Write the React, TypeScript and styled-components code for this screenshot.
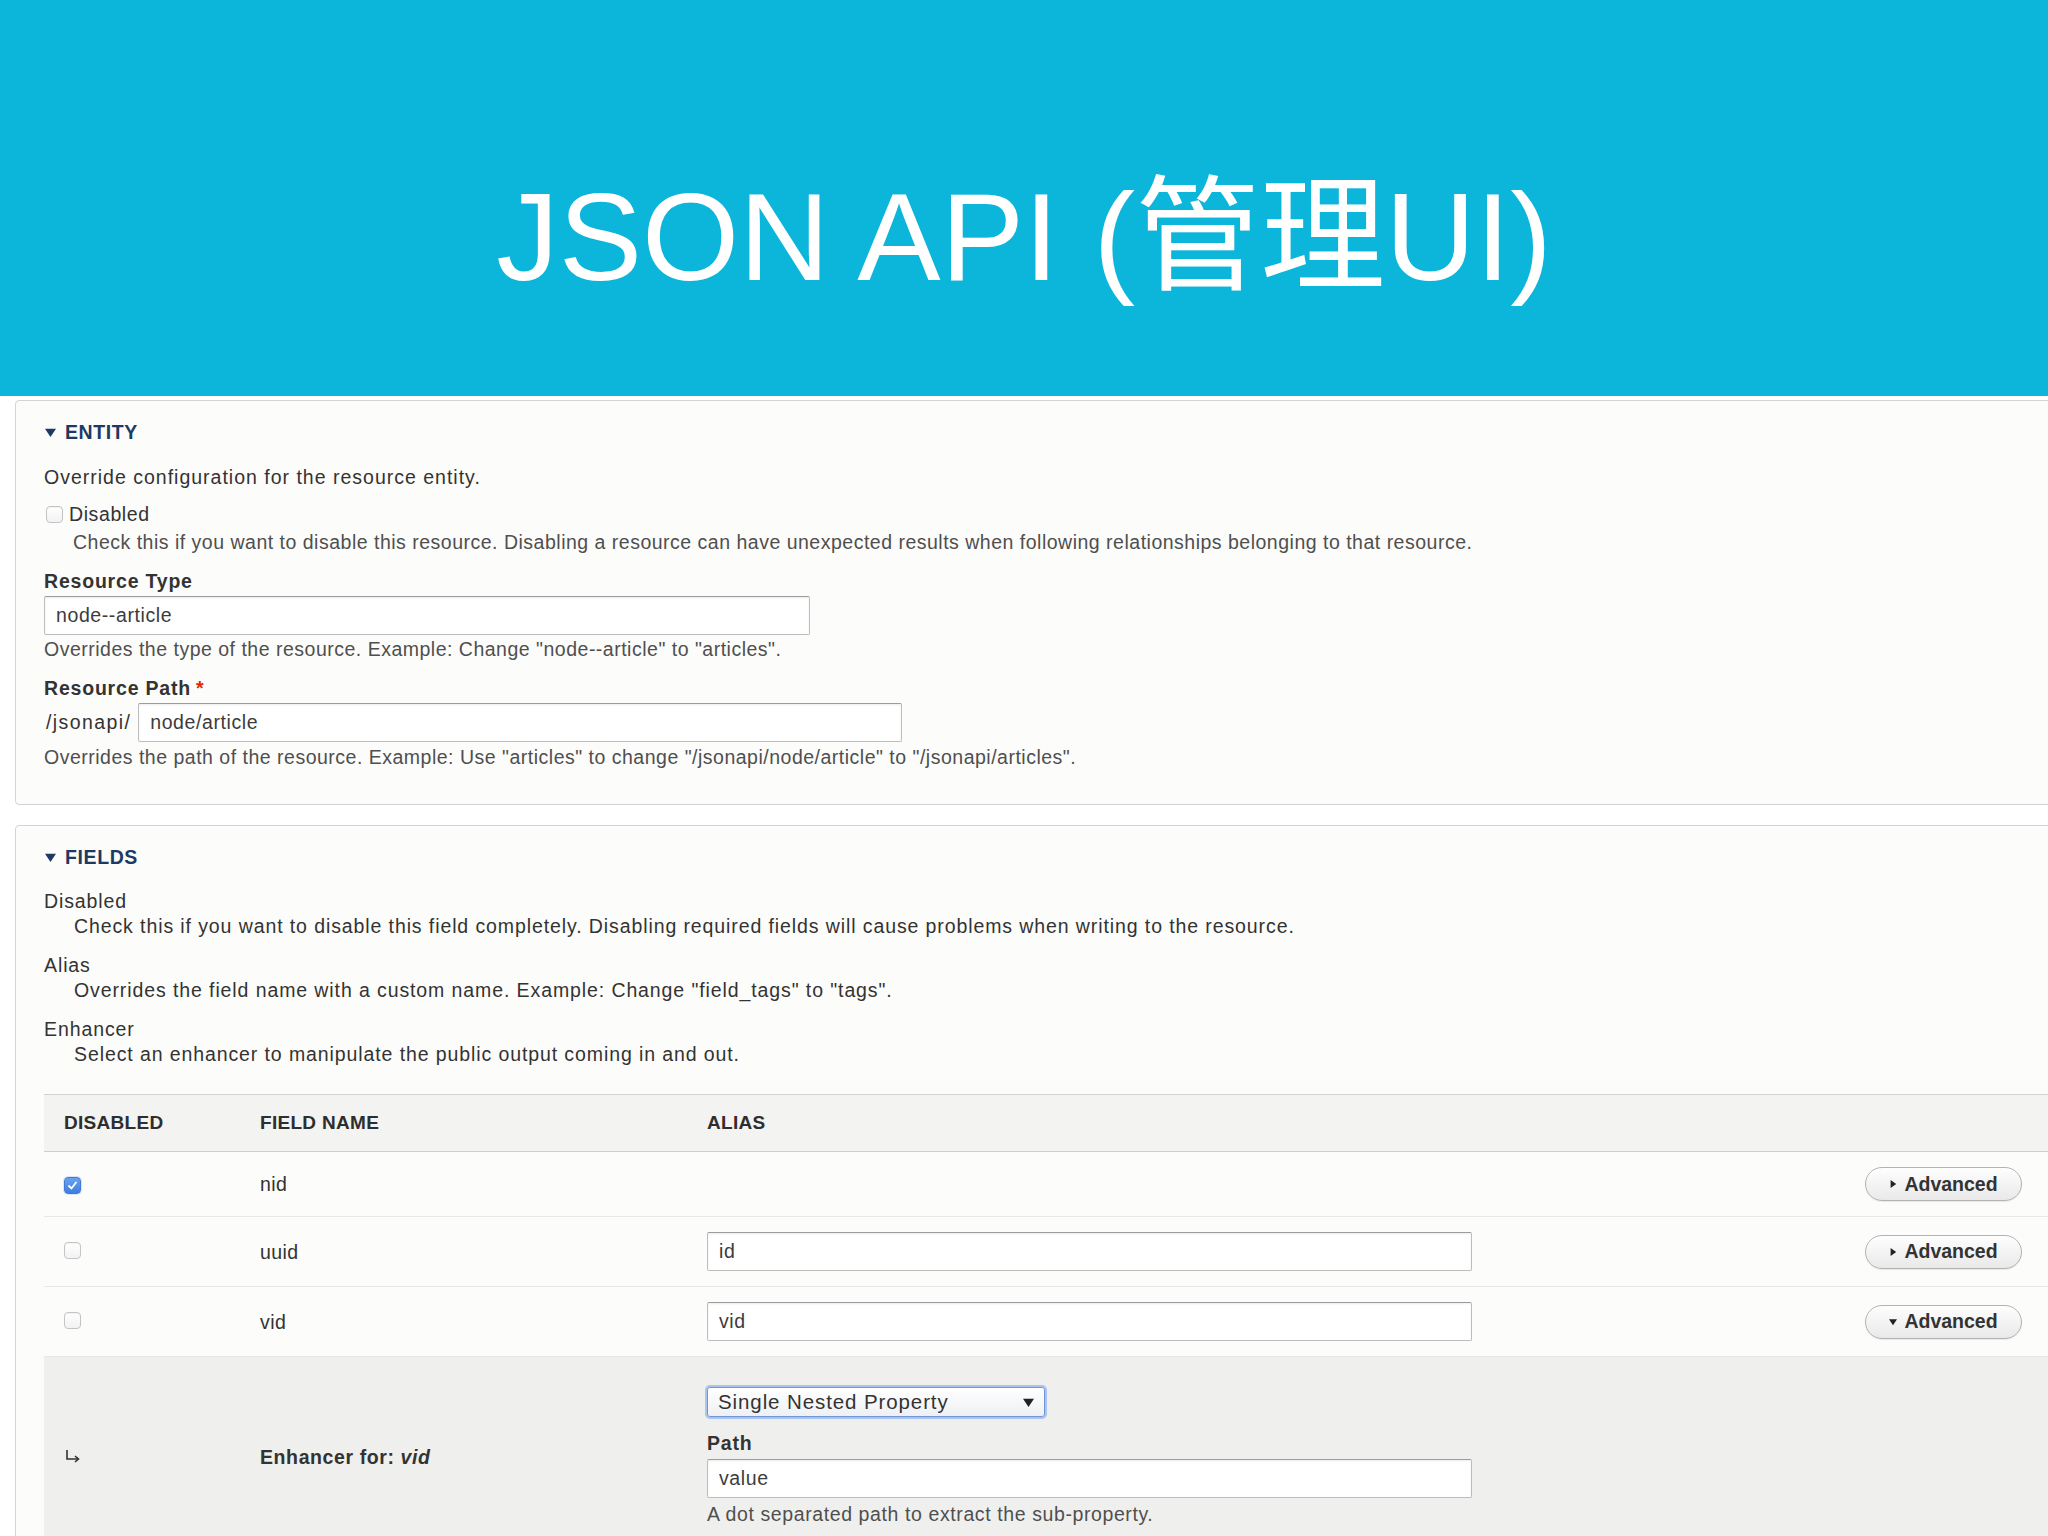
import React from 'react';
import styled, { createGlobalStyle } from 'styled-components';

const GlobalStyle = createGlobalStyle`
    html, body {
        margin: 0;
        padding: 0;
        background: #ffffff;
    }
    body {
        width: 2048px;
        height: 1536px;
        overflow: hidden;
        font-family: "Liberation Sans", Arial, sans-serif;
        color: #333333;
    }
    * {
        box-sizing: border-box;
    }
`;

const Header = styled.header`
    height: 396px;
    background: #0cb5da;
    display: flex;
    justify-content: center;
    padding-top: 174px;
`;

const Title = styled.h1`
    margin: 0;
    color: #ffffff;
    font-family: "Liberation Sans", "Noto Sans CJK SC", Arial, sans-serif;
    font-weight: 400;
    font-size: 125px;
    line-height: 125px;
    white-space: nowrap;
`;

const Main = styled.main`
    display: flex;
    flex-direction: column;
    gap: 20px;
    padding-top: 4px;
`;

const Panel = styled.section<{ $open?: boolean }>`
    margin-left: 15px;
    width: calc(100% + 20px);
    border: 1px solid #d3d3d1;
    border-radius: 4px;
    background: #fcfcfa;
    padding: 18px 0 ${p => (p.$open ? '0' : '34px')} 28px;
    overflow: hidden;
    ${p => p.$open && 'min-height: 720px;'}
`;

const Summary = styled.div`
    display: flex;
    align-items: center;
    gap: 9px;
    height: 26px;
    padding-left: 1px;
    color: #1c3a64;
    font-weight: 700;
    font-size: 19.5px;
    letter-spacing: 0.6px;
    text-transform: uppercase;
`;

const Text = styled.p<{ $top?: number }>`
    margin: ${p => p.$top ?? 0}px 0 0 0;
    font-size: 19.5px;
    line-height: 26px;
    letter-spacing: 1px;
    color: #333333;
`;

const Description = styled.div<{ $top?: number; $indent?: number }>`
    margin: ${p => p.$top ?? 0}px 0 0 ${p => p.$indent ?? 0}px;
    font-size: 19.5px;
    line-height: 26px;
    letter-spacing: 0.5px;
    color: #4f4f4f;
    white-space: nowrap;
`;

const CheckRow = styled.label`
    display: flex;
    align-items: center;
    gap: 6px;
    margin: 11px 0 0 2px;
    height: 26px;
    font-size: 19.5px;
    letter-spacing: 0.6px;
`;

const Box = styled.span<{ $checked?: boolean }>`
    display: inline-flex;
    align-items: center;
    justify-content: center;
    width: 17px;
    height: 17px;
    border-radius: 4px;
    border: 1px solid ${p => (p.$checked ? '#3f7ad6' : '#c4c4c4')};
    background: ${p =>
        p.$checked ? 'linear-gradient(#6aa2f0, #3d7fe0)' : 'linear-gradient(#ffffff, #f2f2f2)'};
    box-shadow: ${p => (p.$checked ? '0 0 0 1px rgba(120,160,230,0.25)' : 'inset 0 1px 1px rgba(0,0,0,0.05)')};
`;

const FormItem = styled.div`
    margin-top: 13px;
`;

const Label = styled.div`
    font-size: 19.5px;
    font-weight: 700;
    line-height: 26px;
    letter-spacing: 0.8px;
    color: #333333;
    margin-bottom: 2px;
`;

const Required = styled.span`
    color: #e32700;
    margin-left: 5px;
`;

const TextInput = styled.input<{ $width: number }>`
    display: block;
    width: ${p => p.$width}px;
    height: 39px;
    padding: 0 11px;
    border: 1px solid #bdbdbd;
    border-top-color: #9c9c9c;
    border-radius: 2px;
    background: #ffffff;
    box-shadow: inset 0 1px 2px rgba(0, 0, 0, 0.08);
    font-family: "Liberation Sans", Arial, sans-serif;
    font-size: 19.5px;
    letter-spacing: 0.6px;
    color: #3c3c3c;
    outline: none;
`;

const PathRow = styled.div`
    display: flex;
    align-items: center;
    gap: 7px;
    padding-left: 2px;
    font-size: 19.5px;
    letter-spacing: 1.4px;
`;

const DefList = styled.dl`
    margin: 19px 0 0 0;
    font-size: 19.5px;
    line-height: 25px;
    letter-spacing: 0.9px;
`;

const Term = styled.dt`
    color: #333333;
    & + dd + dt {
        margin-top: 14px;
    }
`;

const Def = styled.dd`
    margin: 0 0 0 30px;
    color: #333333;
    white-space: nowrap;
`;

const Table = styled.div`
    margin-top: 27px;
    width: 2004px;
`;

const Row = styled.div<{ $tone?: 'head' | 'body' | 'sub' }>`
    display: grid;
    grid-template-columns: 196px 447px 1fr auto;
    align-items: center;
    padding: ${p => (p.$tone === 'head' ? '0' : p.$tone === 'sub' ? '30px 0 10px' : '15px 0')};
    height: ${p => (p.$tone === 'head' ? '58px' : 'auto')};
    background: ${p => (p.$tone === 'head' ? '#f3f3f1' : p.$tone === 'sub' ? '#efefee' : '#fcfcfa')};
    border-top: ${p => (p.$tone === 'head' ? '1px solid #d2d2d0' : 'none')};
    border-bottom: ${p =>
        p.$tone === 'head' ? '1px solid #cfcfcd' : p.$tone === 'sub' ? 'none' : '1px solid #e8e8e6'};
`;

const Cell = styled.div<{ $bold?: boolean }>`
    padding-left: 20px;
    font-size: 19.5px;
    line-height: 26px;
    letter-spacing: ${p => (p.$bold ? '0.6px' : '0.4px')};
    font-weight: ${p => (p.$bold ? 700 : 400)};
    color: #333333;
    white-space: nowrap;
`;

const HeadCell = styled(Cell)`
    font-weight: 700;
    text-transform: uppercase;
    font-size: 19px;
    letter-spacing: 0.3px;
    color: #2e2e2e;
`;

const ActionCell = styled.div`
    padding-right: 26px;
    display: flex;
    justify-content: flex-end;
`;

const AdvancedButton = styled.button`
    display: inline-flex;
    align-items: center;
    justify-content: center;
    gap: 7px;
    width: 157px;
    height: 34px;
    border: 1px solid #b3b3b3;
    border-radius: 17px;
    background: linear-gradient(#fefefe, #e9e9e9);
    box-shadow: 0 1px 1px rgba(0, 0, 0, 0.08);
    font-family: "Liberation Sans", Arial, sans-serif;
    font-weight: 700;
    font-size: 19.5px;
    color: #333333;
    padding: 0;
`;

const Select = styled.div`
    display: flex;
    align-items: center;
    justify-content: space-between;
    width: 338px;
    height: 30px;
    padding: 0 10px 0 10px;
    border: 1px solid #6f95d6;
    border-radius: 3px;
    background: linear-gradient(#ffffff, #eef0f3);
    box-shadow: 0 0 0 2px #a9c4f0;
    font-size: 20.5px;
    letter-spacing: 0.9px;
    color: #333333;
`;

const SubLabel = styled(Label)`
    margin: 13px 0 3px 0;
`;

const Hint = styled.div`
    margin-top: 3px;
    font-size: 19.5px;
    line-height: 26px;
    letter-spacing: 0.6px;
    color: #4f4f4f;
`;

const Triangle = ({ dir, size = 10, color = '#1c3a64' }: { dir: 'down' | 'right'; size?: number; color?: string }) => (
    <svg width={size} height={size} viewBox="0 0 10 10">
        {dir === 'down' ? (
            <polygon points="0,1.5 10,1.5 5,9" fill={color} />
        ) : (
            <polygon points="2,0 9,5 2,10" fill={color} />
        )}
    </svg>
);

const Checkbox = ({ checked }: { checked?: boolean }) => (
    <Box $checked={checked}>
        {checked && (
            <svg width="11" height="11" viewBox="0 0 11 11">
                <path d="M2 6 L4.5 8.5 L9 2.5" fill="none" stroke="#ffffff" strokeWidth="1.8" strokeLinecap="round" />
            </svg>
        )}
    </Box>
);

const SubArrow = () => (
    <svg width="18" height="16" viewBox="0 0 18 16">
        <path d="M3 2 V11 H14" fill="none" stroke="#333" strokeWidth="1.6" />
        <path d="M11 8 L14.5 11 L11 14" fill="none" stroke="#333" strokeWidth="1.6" />
    </svg>
);

interface FieldRow {
    name: string;
    alias?: string;
    disabled?: boolean;
    open?: boolean;
}

const fields: FieldRow[] = [
    { name: 'nid', disabled: true },
    { name: 'uuid', alias: 'id' },
    { name: 'vid', alias: 'vid', open: true },
];

const App = () => {
    return (
        <>
            <GlobalStyle />
            <Header>
                <Title>JSON API (管理UI)</Title>
            </Header>
            <Main>
                <Panel>
                    <Summary>
                        <Triangle dir="down" size={11} />
                        Entity
                    </Summary>
                    <Text $top={19}>Override configuration for the resource entity.</Text>
                    <CheckRow>
                        <Checkbox />
                        Disabled
                    </CheckRow>
                    <Description $top={2} $indent={29}>
                        Check this if you want to disable this resource. Disabling a resource can have unexpected
                        results when following relationships belonging to that resource.
                    </Description>
                    <FormItem>
                        <Label>Resource Type</Label>
                        <TextInput $width={766} readOnly value="node--article" />
                        <Description $top={1}>
                            Overrides the type of the resource. Example: Change "node--article" to "articles".
                        </Description>
                    </FormItem>
                    <FormItem>
                        <Label>
                            Resource Path<Required>*</Required>
                        </Label>
                        <PathRow>
                            /jsonapi/
                            <TextInput $width={764} readOnly value="node/article" />
                        </PathRow>
                        <Description $top={2}>
                            Overrides the path of the resource. Example: Use "articles" to change
                            "/jsonapi/node/article" to "/jsonapi/articles".
                        </Description>
                    </FormItem>
                </Panel>

                <Panel $open>
                    <Summary>
                        <Triangle dir="down" size={11} />
                        Fields
                    </Summary>
                    <DefList>
                        <Term>Disabled</Term>
                        <Def>
                            Check this if you want to disable this field completely. Disabling required fields will
                            cause problems when writing to the resource.
                        </Def>
                        <Term>Alias</Term>
                        <Def>Overrides the field name with a custom name. Example: Change "field_tags" to "tags".</Def>
                        <Term>Enhancer</Term>
                        <Def>Select an enhancer to manipulate the public output coming in and out.</Def>
                    </DefList>

                    <Table>
                        <Row $tone="head">
                            <HeadCell>Disabled</HeadCell>
                            <HeadCell>Field name</HeadCell>
                            <HeadCell>Alias</HeadCell>
                            <div />
                        </Row>
                        {fields.map(field => (
                            <Row key={field.name}>
                                <Cell>
                                    <Checkbox checked={field.disabled} />
                                </Cell>
                                <Cell>{field.name}</Cell>
                                <Cell>
                                    {field.alias !== undefined && (
                                        <TextInput $width={765} readOnly value={field.alias} />
                                    )}
                                </Cell>
                                <ActionCell>
                                    <AdvancedButton>
                                        <Triangle dir={field.open ? 'down' : 'right'} size={8} color="#222" />
                                        Advanced
                                    </AdvancedButton>
                                </ActionCell>
                            </Row>
                        ))}
                        <Row $tone="sub">
                            <Cell>
                                <SubArrow />
                            </Cell>
                            <Cell $bold>
                                Enhancer for: <em>vid</em>
                            </Cell>
                            <Cell>
                                <Select>
                                    Single Nested Property
                                    <Triangle dir="down" size={11} color="#222" />
                                </Select>
                                <SubLabel>Path</SubLabel>
                                <TextInput $width={765} readOnly value="value" />
                                <Hint>A dot separated path to extract the sub-property.</Hint>
                            </Cell>
                            <div />
                        </Row>
                    </Table>
                </Panel>
            </Main>
        </>
    );
};

export default App;
